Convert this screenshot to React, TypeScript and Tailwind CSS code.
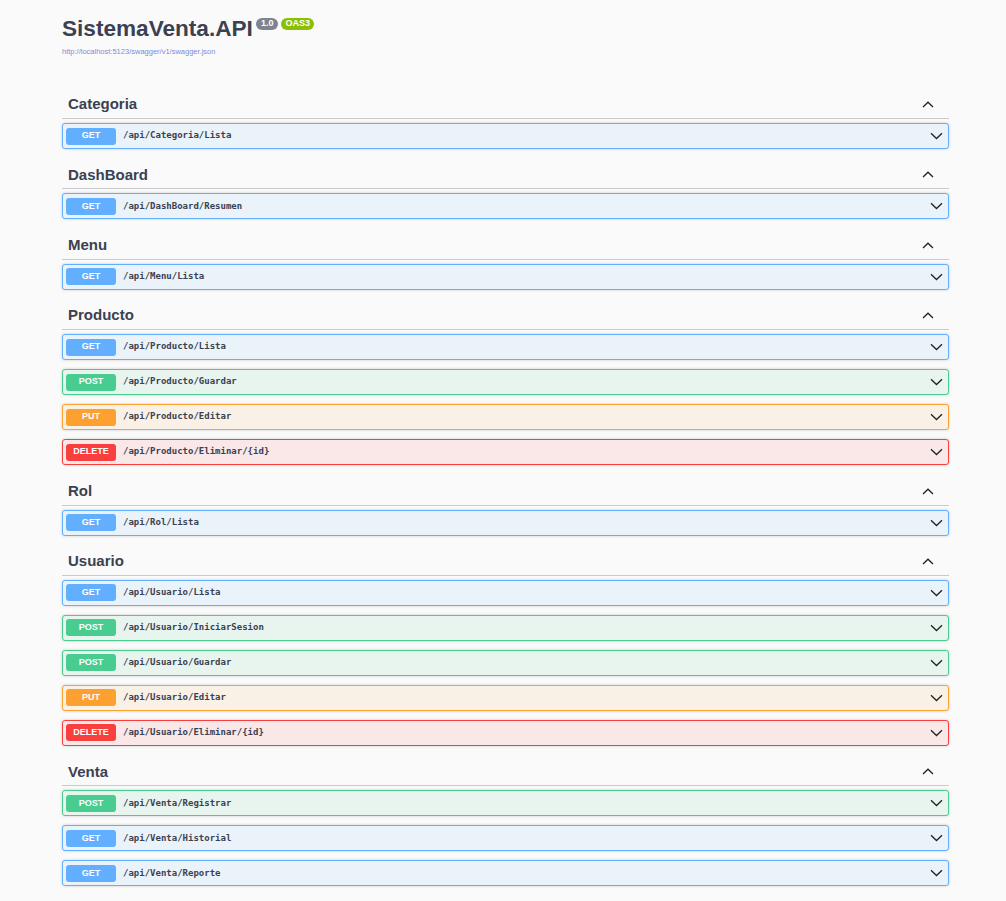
import React from 'react';

type Method = 'GET' | 'POST' | 'PUT' | 'DELETE';

interface Operation {
  method: Method;
  path: string;
}

interface TagGroup {
  name: string;
  ops: Operation[];
}

const groups: TagGroup[] = [
  { name: 'Categoria', ops: [{ method: 'GET', path: '/api/Categoria/Lista' }] },
  { name: 'DashBoard', ops: [{ method: 'GET', path: '/api/DashBoard/Resumen' }] },
  { name: 'Menu', ops: [{ method: 'GET', path: '/api/Menu/Lista' }] },
  {
    name: 'Producto',
    ops: [
      { method: 'GET', path: '/api/Producto/Lista' },
      { method: 'POST', path: '/api/Producto/Guardar' },
      { method: 'PUT', path: '/api/Producto/Editar' },
      { method: 'DELETE', path: '/api/Producto/Eliminar/{id}' },
    ],
  },
  { name: 'Rol', ops: [{ method: 'GET', path: '/api/Rol/Lista' }] },
  {
    name: 'Usuario',
    ops: [
      { method: 'GET', path: '/api/Usuario/Lista' },
      { method: 'POST', path: '/api/Usuario/IniciarSesion' },
      { method: 'POST', path: '/api/Usuario/Guardar' },
      { method: 'PUT', path: '/api/Usuario/Editar' },
      { method: 'DELETE', path: '/api/Usuario/Eliminar/{id}' },
    ],
  },
  {
    name: 'Venta',
    ops: [
      { method: 'POST', path: '/api/Venta/Registrar' },
      { method: 'GET', path: '/api/Venta/Historial' },
      { method: 'GET', path: '/api/Venta/Reporte' },
    ],
  },
];

// block colours per http verb
const methodStyles: Record<Method, { block: string; badge: string }> = {
  GET: { block: 'bg-[#ebf3fa] border-[#61affe]', badge: 'bg-[#61affe]' },
  POST: { block: 'bg-[#e8f5ef] border-[#49cc90]', badge: 'bg-[#49cc90]' },
  PUT: { block: 'bg-[#faf1e6] border-[#fca130]', badge: 'bg-[#fca130]' },
  DELETE: { block: 'bg-[#fae7e7] border-[#f93e3e]', badge: 'bg-[#f93e3e]' },
};

const ChevronUp = () => (
  <svg width="12" height="7" viewBox="0 0 12 7" fill="none" aria-hidden="true">
    <path d="M1 6L6 1.2L11 6" stroke="#222" strokeWidth={1.3} />
  </svg>
);

const ChevronDown = () => (
  <svg width="13" height="8" viewBox="0 0 13 8" fill="none" aria-hidden="true">
    <path d="M1 1.2L6.5 6.5L12 1.2" stroke="#222" strokeWidth={1.3} />
  </svg>
);

const OperationRow: React.FC<{ op: Operation }> = ({ op }) => {
  const style = methodStyles[op.method];
  return (
    <div
      className={`h-[26px] flex items-center border rounded-[3px] pl-[3px] pr-[3px] shadow-[0_0_3px_rgba(0,0,0,0.19)] ${style.block}`}
    >
      <span
        className={`w-[50px] h-[17px] flex items-center justify-center rounded-[3px] text-white font-bold text-[9px] font-['Liberation_Sans',Arial,sans-serif] ${style.badge}`}
      >
        {op.method}
      </span>
      <span className="ml-[7px] flex-1 text-[9px] font-semibold text-[#3b4151] font-['DejaVu_Sans_Mono',monospace]">
        {op.path}
      </span>
      <span className="mr-[2px] flex items-center">
        <ChevronDown />
      </span>
    </div>
  );
};

const TagSection: React.FC<{ group: TagGroup }> = ({ group }) => (
  <div className="pb-[9.4px]">
    <div className="h-[31px] pt-[3px] flex items-center justify-between border-b border-[#c8cace] pl-[6px] pr-[15px]">
      <h3 className="text-[15px] font-bold text-[#3b4151]">{group.name}</h3>
      <ChevronUp />
    </div>
    <div className="mt-[4px] flex flex-col gap-[9px]">
      {group.ops.map((op) => (
        <OperationRow key={op.method + op.path} op={op} />
      ))}
    </div>
  </div>
);

export default function App() {
  return (
    <div className="min-h-[901px] bg-[#fafafa] font-['Liberation_Sans',Arial,sans-serif]">
      <div className="w-[887px] ml-[62px]">
        <div className="h-[88px] pt-[16px]">
          <div className="flex items-start">
            <h2 className="text-[22.6px] leading-[26px] font-bold text-[#3b4151]">SistemaVenta.API</h2>
            <span className="ml-[3px] mt-[2px] h-[12px] px-[5px] flex items-center rounded-full bg-[#7d8492] text-white text-[9px] font-bold">
              1.0
            </span>
            <span className="ml-[3px] mt-[2px] h-[12px] px-[4px] flex items-center rounded-full bg-[#89bf04] text-white text-[9px] font-bold">
              OAS3
            </span>
          </div>
          <a className="block mt-[5px] text-[7.5px] leading-[9px] text-[#7f89dd]">
            http://localhost:5123/swagger/v1/swagger.json
          </a>
        </div>
        {groups.map((g) => (
          <TagSection key={g.name} group={g} />
        ))}
      </div>
    </div>
  );
}
